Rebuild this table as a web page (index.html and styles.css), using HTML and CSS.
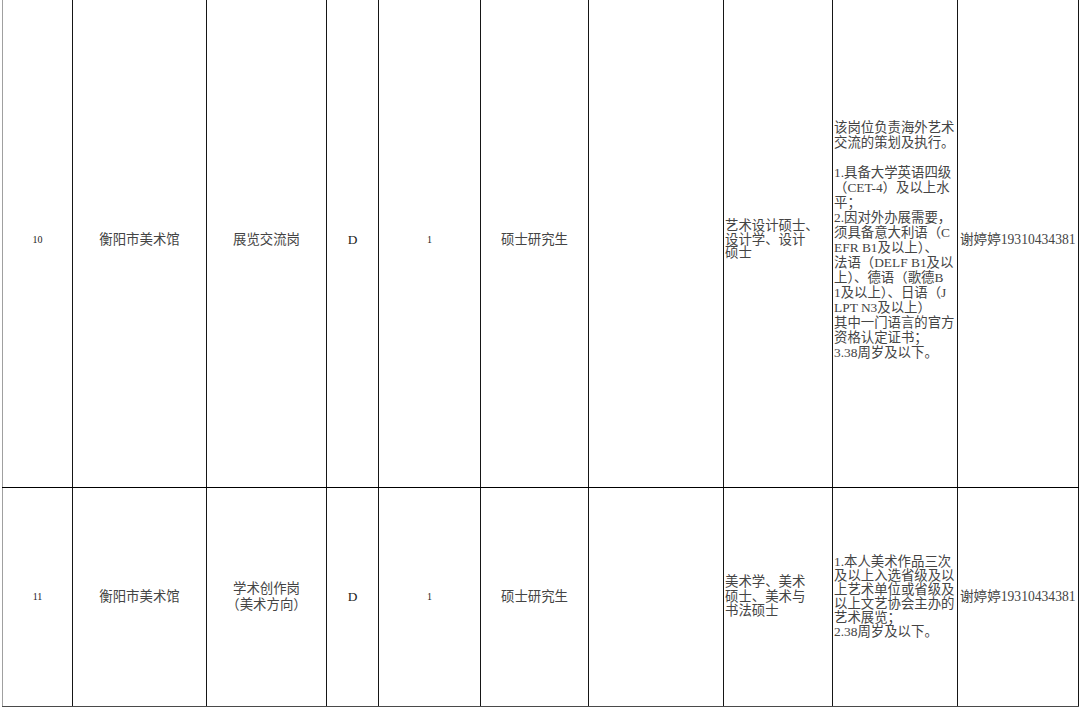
FILE: index.html
```html
<!DOCTYPE html>
<html lang="zh-CN">
<head>
<meta charset="utf-8">
<title>岗位表</title>
<link rel="stylesheet" href="styles.css">
</head>
<body>
<table class="jobs">
  <colgroup>
    <col class="c1"><col class="c2"><col class="c3"><col class="c4"><col class="c5">
    <col class="c6"><col class="c7"><col class="c8"><col class="c9"><col class="c10">
  </colgroup>
  <tbody>
    <tr class="row-a">
      <td class="center num">10</td>
      <td class="center">衡阳市美术馆</td>
      <td class="center">展览交流岗</td>
      <td class="center latin">D</td>
      <td class="center num">1</td>
      <td class="center">硕士研究生</td>
      <td class="center"></td>
      <td class="left major">艺术设计硕士、<br>设计学、设计<br>硕士</td>
      <td class="left req">该岗位负责海外艺术<br>交流的策划及执行。<br><br>1.具备大学英语四级<br>（CET-4）及以上水<br>平；<br>2.因对外办展需要，<br>须具备意大利语（C<br>EFR B1及以上）、<br>法语（DELF B1及以<br>上）、德语（歌德B<br>1及以上）、日语（J<br>LPT N3及以上）<br>其中一门语言的官方<br>资格认定证书；<br>3.38周岁及以下。</td>
      <td class="contact">谢婷婷19310434381</td>
    </tr>
    <tr class="row-b">
      <td class="center num">11</td>
      <td class="center">衡阳市美术馆</td>
      <td class="center post">学术创作岗<br>（美术方向）</td>
      <td class="center latin">D</td>
      <td class="center num">1</td>
      <td class="center">硕士研究生</td>
      <td class="center"></td>
      <td class="left major major-b">美术学、美术<br>硕士、美术与<br>书法硕士</td>
      <td class="left req req-b">1.本人美术作品三次<br>及以上入选省级及以<br>上艺术单位或省级及<br>以上文艺协会主办的<br>艺术展览；<br>2.38周岁及以下。</td>
      <td class="contact">谢婷婷19310434381</td>
    </tr>
  </tbody>
</table>
</body>
</html>
```

FILE: styles.css
```css
html, body {
  margin: 0;
  padding: 0;
  background: #ffffff;
}

body {
  font-family: "Liberation Serif", "Noto Sans CJK SC", serif;
  color: #444444;
  overflow: hidden;
}

.jobs {
  border-collapse: collapse;
  table-layout: fixed;
  width: 1077px;
  margin: -8px 0 0 2px;
}

.c1 { width: 70px; }
.c2 { width: 134px; }
.c3 { width: 120px; }
.c4 { width: 52px; }
.c5 { width: 102px; }
.c6 { width: 108px; }
.c7 { width: 135px; }
.c8 { width: 109px; }
.c9 { width: 125px; }
.c10 { width: 121px; }

.jobs td {
  border: 1px solid #161616;
  border-top: none;
  padding: 0 2px;
  vertical-align: middle;
  font-size: 13.4px;
  line-height: 14px;
  white-space: nowrap;
  font-weight: 400;
}

.jobs td:first-child {
  border-left: 1px solid #a0a0a0;
}

.row-a td {
  height: 495px;
  border-bottom-color: #000000;
}

.row-b td {
  height: 218px;
  border-bottom-color: #4a4a4a;
}

.center {
  text-align: center;
}

.left {
  text-align: left;
}

.jobs .num {
  font-size: 10px;
  color: #222222;
}

.latin {
  color: #222222;
}

.jobs .post {
  line-height: 16px;
}

.jobs .major {
  line-height: 13.5px;
  padding-left: 1px;
}

.jobs .major-b {
  line-height: 14.5px;
}

.jobs .req {
  line-height: 15px;
  padding-left: 1px;
  padding-right: 0;
}

.jobs .req-b {
  line-height: 14px;
}

.jobs .contact {
  text-align: left;
  padding-left: 2px;
  padding-right: 0;
  font-size: 13.6px;
}
```
